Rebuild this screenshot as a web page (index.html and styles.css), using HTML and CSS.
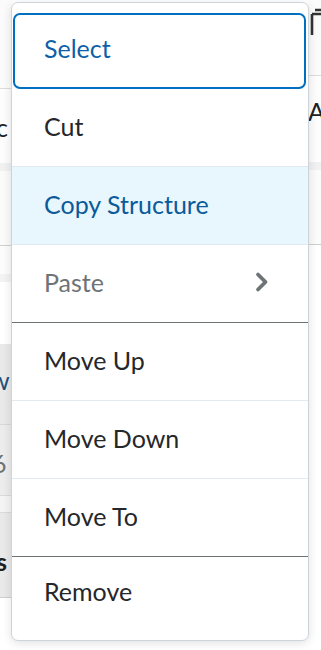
FILE: index.html
```html
<!DOCTYPE html>
<html>
<head>
<meta charset="utf-8">
<link rel="stylesheet" href="styles.css">
</head>
<body>
<div class="page">
  <div class="strip left">
    <div class="blk b-top"></div>
    <div class="blk b-c"><span class="frag frag-c">c</span></div>
    <div class="blk b-band"></div>
    <div class="blk b-mid"></div>
    <div class="blk b-white"></div>
    <div class="blk b-band2"></div>
    <div class="blk b-gap"></div>
    <div class="grey">
      <div class="blk g1"><span class="frag frag-w">w</span></div>
      <div class="blk g2"><span class="frag frag-6">6</span></div>
      <div class="blk g3"></div>
      <div class="blk g4"><span class="frag frag-s">s</span></div>
    </div>
  </div>
  <div class="strip right">
    <div class="blk r-top">
      <svg class="r-icon" width="14" height="30" viewBox="0 0 14 30"><path d="M3 6 V27 M3 6 H12 M6 2 H13" fill="none" stroke="#333" stroke-width="2.6"/></svg>
    </div>
    <div class="blk r-a"><span class="frag frag-a">A</span></div>
    <div class="blk b-band"></div>
    <div class="blk r-mid"></div>
  </div>
</div>

<div class="menu">
  <div class="item focus select">Select</div>
  <div class="item">Cut</div>
  <div class="item hover">Copy Structure</div>
  <div class="item disabled sep">Paste
    <svg class="chev" width="16" height="22" viewBox="0 0 16 22"><path d="M4 3.5 L11.5 11 L4 18.5" fill="none" stroke="#6e7376" stroke-width="3.8" stroke-linecap="round" stroke-linejoin="round"/></svg>
  </div>
  <div class="item">Move Up</div>
  <div class="item">Move Down</div>
  <div class="item sep">Move To</div>
  <div class="item last">Remove</div>
</div>
</body>
</html>
```
FILE: styles.css
```css
html, body {
  margin: 0;
  padding: 0;
  background: #ffffff;
}
body {
  width: 321px;
  height: 650px;
  overflow: hidden;
  font-family: Lato, "Open Sans", sans-serif;
  position: relative;
}
.page {
  display: flex;
  justify-content: space-between;
  height: 650px;
}
.strip {
  display: flex;
  flex-direction: column;
  overflow: hidden;
}
.left { width: 12px; }
.right { width: 13px; }
.blk {
  position: relative;
  overflow: hidden;
  flex: none;
}
.b-top { height: 88px; background: #fbfbfb; border-bottom: 1px solid #dcdcdc; }
.b-c { height: 74px; background: #fdfdfd; }
.b-band { height: 8px; background: #f1f1f1; }
.b-mid { height: 74px; background: #fbfbfb; border-bottom: 1px solid #cfcfcf; }
.b-white { height: 28px; background: #fcfcfc; }
.b-band2 { height: 8px; background: #f3f3f3; }
.b-gap { height: 62px; background: #ffffff; }
.grey {
  background: #e9e9e9;
  display: flex;
  flex-direction: column;
  border-bottom: 1px solid #cfcfcf;
  flex: none;
}
.g1 { height: 80px; border-bottom: 1px solid #d9d9d9; }
.g2 { height: 70px; background: #ececec; }
.g3 { height: 16px; background: #f4f4f4; border-top: 1px solid #dadada; border-bottom: 1px solid #dadada; }
.g4 { height: 84px; }
.frag {
  font-size: 25px;
  line-height: 1;
  color: #202122;
  display: block;
}
.frag-c { margin: 26px 0 0 -4px; }
.frag-w { margin: 24px 0 0 -10px; color: #1d4f7a; }
.frag-6 { margin: 26px 0 0 -8px; color: #6e7376; }
.frag-s { margin: 36px 0 0 -4px; font-weight: 700; }
.frag-a { margin: 23px 0 0 0; color: #202122; }
.r-top { height: 75px; border-bottom: 1px solid #dcdcdc; background: #fbfbfb; }
.r-icon { display: block; margin: 8px 0 0 1px; }
.r-a { height: 86px; background: #fdfdfd; }
.r-mid { height: 74px; background: #fbfbfb; border-bottom: 1px solid #cfcfcf; }

.menu {
  position: absolute;
  left: 11px;
  top: 2px;
  width: 296px;
  height: 627px;
  padding-top: 10px;
  background: #ffffff;
  border: 1px solid #cdd4dc;
  border-radius: 7px;
  box-shadow: 0 2px 10px rgba(0, 0, 0, 0.12);
  display: flex;
  flex-direction: column;
}
.item {
  height: 78px;
  box-sizing: border-box;
  padding-left: 32px;
  padding-right: 38px;
  padding-bottom: 3px;
  display: flex;
  align-items: center;
  justify-content: space-between;
  font-size: 25px;
  color: #25272a;
  border-bottom: 1px solid #e3e9f1;
  flex: none;
}
.select {
  height: 76px;
  margin: 0 2px 0 1px;
  padding-left: 29px;
  padding-bottom: 7px;
  border: 2px solid #006fbf;
  border-radius: 7px;
  color: #0f5fa8;
}
.hover {
  background: #e8f6fe;
  color: #0b5a9a;
}
.disabled { color: #6e7376; }
.sep { border-bottom: 1px solid #6e7376; }
.chev { display: block; }
.last { border-bottom: none; padding-bottom: 11px; }
```
